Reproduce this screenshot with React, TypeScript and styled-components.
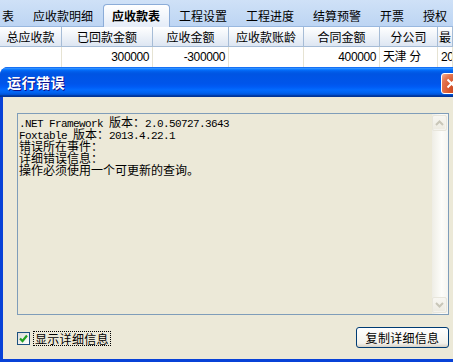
import * as React from "react";
import styled, { createGlobalStyle } from "styled-components";

const TABS = ["表", "应收款明细", "应收款表", "工程设置", "工程进度", "结算预警", "开票", "授权"];
const ACTIVE_TAB = 2;

const COLUMNS = ["总应收款", "已回款金额", "应收金额", "应收款账龄", "合同金额", "分公司", "最"];
const ROW: { text: string; align: "left" | "right" }[] = [
  { text: "", align: "right" },
  { text: "300000", align: "right" },
  { text: "-300000", align: "right" },
  { text: "", align: "right" },
  { text: "400000", align: "right" },
  { text: "天津 分", align: "left" },
  { text: "20", align: "left" },
];

const DETAIL = [
  ".NET Framework 版本：2.0.50727.3643",
  "Foxtable 版本：2013.4.22.1",
  "错误所在事件：",
  "详细错误信息：",
  "操作必须使用一个可更新的查询。",
];

// latin runs get the narrow mono face, the rest stays full width
const splitRuns = (line: string) => line.match(/[\u0000-\u00ff]+|[^\u0000-\u00ff]+/g) || [];

const App = () => {
  return (
    <>
      <GlobalStyle />
      <TabStrip>
        {TABS.map((t, i) => (
          <Tab key={t} $active={i === ACTIVE_TAB}>
            {t}
          </Tab>
        ))}
      </TabStrip>
      <Grid>
        {COLUMNS.map((c) => (
          <HeaderCell key={c}>{c}</HeaderCell>
        ))}
        {ROW.map((cell, i) => (
          <DataCell key={i} $align={cell.align}>
            {cell.text}
          </DataCell>
        ))}
      </Grid>

      <Window>
        <TitleBar>
          <Title>运行错误</Title>
          <CloseButton>
            <svg width="11" height="11" viewBox="0 0 11 11">
              <path d="M1.5 1.5 L9.5 9.5 M9.5 1.5 L1.5 9.5" stroke="#fff" strokeWidth="2" />
            </svg>
          </CloseButton>
        </TitleBar>
        <Body>
          <TextBox>
            <TextContent>
              {DETAIL.map((line, i) => (
                <TextLine key={i}>
                  {splitRuns(line).map((run, j) =>
                    /^[\u0000-\u00ff]+$/.test(run) ? <Latin key={j}>{run}</Latin> : <span key={j}>{run}</span>
                  )}
                </TextLine>
              ))}
            </TextContent>
            <ScrollBar>
              <ScrollButton>
                <svg width="9" height="6" viewBox="0 0 9 6">
                  <path d="M1 5 L4.5 1.5 L8 5" stroke="#C8C6B8" strokeWidth="2" fill="none" />
                </svg>
              </ScrollButton>
              <ScrollButton>
                <svg width="9" height="6" viewBox="0 0 9 6">
                  <path d="M1 1 L4.5 4.5 L8 1" stroke="#C8C6B8" strokeWidth="2" fill="none" />
                </svg>
              </ScrollButton>
            </ScrollBar>
          </TextBox>
          <Footer>
            <CheckLabel>
              <CheckBox>
                <svg width="9" height="9" viewBox="0 0 9 9">
                  <path d="M1 4.5 L3.5 7 L8 1.5" stroke="#21A121" strokeWidth="2.2" fill="none" />
                </svg>
              </CheckBox>
              <FocusText>显示详细信息</FocusText>
            </CheckLabel>
            <Button>复制详细信息</Button>
          </Footer>
        </Body>
      </Window>
    </>
  );
};

export default App;

const GlobalStyle = createGlobalStyle`
  html, body {
    margin: 0;
    padding: 0;
    width: 453px;
    height: 362px;
    overflow: hidden;
    background: #fff;
  }
  body {
    font-family: "Noto Sans CJK SC", sans-serif;
    font-size: 12px;
    color: #000;
  }
`;

const TabStrip = styled.div`
  display: flex;
  align-items: flex-end;
  height: 27px;
  box-sizing: border-box;
  margin-left: -7.5px;
  background: linear-gradient(#CFE1F7, #BDD5F3);
  border-bottom: 1px solid #99B8DF;
`;

const Tab = styled.div<{ $active?: boolean }>`
  display: flex;
  align-items: center;
  height: ${(p) => (p.$active ? "22px" : "21px")};
  padding: 0 ${(p) => (p.$active ? "8.5px" : "9.5px")};
  white-space: nowrap;
  line-height: 12px;
  font-weight: ${(p) => (p.$active ? "bold" : "normal")};
  ${(p) =>
    p.$active &&
    `
    background: linear-gradient(#FFFFFF, #E4ECF8);
    border: 1px solid #8BACD8;
    border-bottom: none;
    border-radius: 4px 4px 0 0;
    margin-bottom: -1px;
  `}
`;

const Grid = styled.div`
  display: grid;
  grid-template-columns: 62px 91px 76px 75px 76px 58px 1fr;
  grid-template-rows: 20px 20px;
`;

const HeaderCell = styled.div`
  box-sizing: border-box;
  border-right: 1px solid #A6BCD6;
  border-bottom: 1px solid #A6BCD6;
  background: linear-gradient(#FFFFFF, #DDE6F2);
  text-align: center;
  line-height: 19px;
  white-space: nowrap;
  overflow: hidden;
`;

const DataCell = styled.div<{ $align: "left" | "right" }>`
  box-sizing: border-box;
  border-right: 1px solid #E6E3D3;
  background: #fff;
  padding: 0 3px;
  text-align: ${(p) => p.$align};
  line-height: 20px;
  font-family: "Liberation Sans", "Noto Sans CJK SC", sans-serif;
  font-size: 12px;
  letter-spacing: -0.4px;
  white-space: nowrap;
  overflow: hidden;
`;

const Window = styled.div`
  display: flex;
  flex-direction: column;
  width: 470px;
  height: 295px;
  box-sizing: border-box;
  background: #0842D7;
  border-radius: 8px 8px 0 0;
`;

const TitleBar = styled.div`
  display: flex;
  align-items: center;
  justify-content: space-between;
  height: 30px;
  flex-shrink: 0;
  padding: 0 8px 0 7px;
  box-sizing: border-box;
  border-radius: 8px 8px 0 0;
  background: linear-gradient(
    #0058EE 0%,
    #3593FF 4%,
    #288EFF 6%,
    #127DFF 8%,
    #036FFC 10%,
    #0262EE 14%,
    #0057E5 20%,
    #0054E3 24%,
    #0055EB 56%,
    #005BF5 66%,
    #026AFE 76%,
    #0062EF 86%,
    #0052D6 92%,
    #0040AB 94%,
    #003092 100%
  );
`;

const Title = styled.div`
  color: #fff;
  font-weight: bold;
  font-size: 14px;
  letter-spacing: 0.5px;
  text-shadow: 1px 1px #0F1089;
`;

const CloseButton = styled.div`
  display: flex;
  align-items: center;
  justify-content: center;
  width: 21px;
  height: 21px;
  margin-top: 2px;
  box-sizing: border-box;
  border: 1px solid #fff;
  border-radius: 3px;
  background: radial-gradient(circle at 85% 85%, #C13D16 0%, #DA5A31 45%, #E57752 75%, #F2B39B 100%);
`;

const Body = styled.div`
  flex: 1;
  display: flex;
  flex-direction: column;
  gap: 12px;
  margin: 0 3px 3px;
  padding: 16px 18px 11px 14px;
  background: #ECE9D8;
`;

const TextBox = styled.div`
  display: flex;
  height: 202px;
  box-sizing: border-box;
  border: 1px solid #7F9DB9;
  background: #ECE9D8;
`;

const TextContent = styled.div`
  flex: 1;
  padding: 2px 2px 0 1px;
`;

const TextLine = styled.div`
  height: 12px;
  line-height: 12px;
  font-size: 12px;
  white-space: pre;
`;

const Latin = styled.span`
  font-family: "Liberation Mono", monospace;
  font-size: 11px;
  letter-spacing: -0.6px;
`;

const ScrollBar = styled.div`
  display: flex;
  flex-direction: column;
  justify-content: space-between;
  width: 16px;
  padding: 1px 0;
  box-sizing: border-box;
  background: linear-gradient(to right, #EEEDE5, #FDFDFA 60%, #F6F5F0);
`;

const ScrollButton = styled.div`
  display: flex;
  align-items: center;
  justify-content: center;
  width: 15px;
  height: 16px;
  box-sizing: border-box;
  border: 1px solid #E8E6DC;
  border-radius: 2px;
  background: linear-gradient(#F8F7F2, #ECEAE0);
  box-shadow: inset -1px -1px #F4F3EE;
`;

const Footer = styled.div`
  display: flex;
  align-items: center;
  justify-content: space-between;
  height: 21px;
`;

const CheckLabel = styled.label`
  display: flex;
  align-items: center;
  gap: 3px;
  margin-top: 2px;
`;

const CheckBox = styled.span`
  display: flex;
  align-items: center;
  justify-content: center;
  width: 13px;
  height: 13px;
  box-sizing: border-box;
  border: 1px solid #1C5180;
  background: linear-gradient(135deg, #DCDCD7, #FFFFFF);
`;

const FocusText = styled.span`
  border: 1px dotted #000;
  padding: 0 1px;
  line-height: 13px;
  font-size: 12px;
  letter-spacing: 0.3px;
`;

const Button = styled.div`
  display: flex;
  align-items: center;
  justify-content: center;
  width: 93px;
  height: 21px;
  box-sizing: border-box;
  border: 1px solid #003C74;
  border-radius: 3px;
  background: linear-gradient(#FFFFFF, #F3F2EC 80%, #D6D0C5);
  font-size: 12px;
  letter-spacing: 0.3px;
`;
